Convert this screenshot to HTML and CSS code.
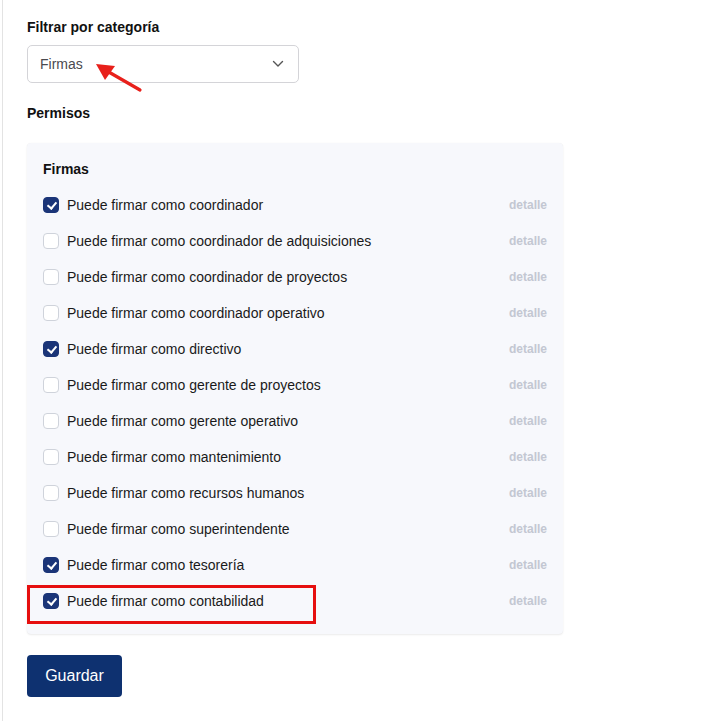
FILE: index.html
```html
<!DOCTYPE html>
<html lang="es">
<head>
<meta charset="utf-8">
<title>Permisos</title>
<link rel="stylesheet" href="styles.css">
</head>
<body>
<div class="page">
  <div class="field">
    <label class="label">Filtrar por categoría</label>
    <div class="select-wrap">
      <div class="select">
        <span>Firmas</span>
        <svg class="chev" width="12" height="8" viewBox="0 0 12 8"><path d="M1.5 1.5 L6 6 L10.5 1.5" fill="none" stroke="#555" stroke-width="1.4" stroke-linecap="round" stroke-linejoin="round"/></svg>
      </div>
      <svg class="arrow" width="60" height="40" viewBox="0 0 60 40"><line x1="49" y1="30" x2="16" y2="11" stroke="#e8201b" stroke-width="3.2" stroke-linecap="round"/><polygon points="5,4 24,6 14,20" fill="#e8201b"/></svg>
    </div>
  </div>

  <div class="label perm">Permisos</div>

  <div class="card">
    <div class="card-title">Firmas</div>
    <ul class="list">
      <li class="row"><span class="cb on"></span><span class="txt">Puede firmar como coordinador</span><span class="det">detalle</span></li>
      <li class="row"><span class="cb"></span><span class="txt">Puede firmar como coordinador de adquisiciones</span><span class="det">detalle</span></li>
      <li class="row"><span class="cb"></span><span class="txt">Puede firmar como coordinador de proyectos</span><span class="det">detalle</span></li>
      <li class="row"><span class="cb"></span><span class="txt">Puede firmar como coordinador operativo</span><span class="det">detalle</span></li>
      <li class="row"><span class="cb on"></span><span class="txt">Puede firmar como directivo</span><span class="det">detalle</span></li>
      <li class="row"><span class="cb"></span><span class="txt">Puede firmar como gerente de proyectos</span><span class="det">detalle</span></li>
      <li class="row"><span class="cb"></span><span class="txt">Puede firmar como gerente operativo</span><span class="det">detalle</span></li>
      <li class="row"><span class="cb"></span><span class="txt">Puede firmar como mantenimiento</span><span class="det">detalle</span></li>
      <li class="row"><span class="cb"></span><span class="txt">Puede firmar como recursos humanos</span><span class="det">detalle</span></li>
      <li class="row"><span class="cb"></span><span class="txt">Puede firmar como superintendente</span><span class="det">detalle</span></li>
      <li class="row"><span class="cb on"></span><span class="txt">Puede firmar como tesorería</span><span class="det">detalle</span></li>
      <li class="row last"><span class="cb on"></span><span class="txt">Puede firmar como contabilidad</span><span class="det">detalle</span><span class="highlight"></span></li>
    </ul>
  </div>

  <button class="btn">Guardar</button>
</div>
</body>
</html>
```

FILE: styles.css
```css
* { box-sizing: border-box; }
html, body { margin: 0; padding: 0; background: #fff; }
body {
  font-family: "Liberation Sans", Arial, Helvetica, sans-serif;
  color: #111827;
}
.page {
  margin-left: 2px;
  border-left: 1px solid #e3e3e3;
  min-height: 721px;
  padding: 17px 0 0 24px;
}
.label {
  display: block;
  font-size: 14px;
  font-weight: bold;
  line-height: 20px;
  color: #111;
}
.select-wrap {
  position: relative;
  margin-top: 8px;
  width: 272px;
}
.select {
  height: 38px;
  border: 1px solid #d4d4d8;
  border-radius: 5px;
  display: flex;
  align-items: center;
  justify-content: space-between;
  padding: 0 14px 0 12px;
  font-size: 14px;
  color: #4a4a4f;
  background: #fff;
}
.chev { display: block; }
.arrow {
  position: absolute;
  left: 64px;
  top: 15px;
}
.perm { margin-top: 20px; }
.card {
  margin-top: 20px;
  width: 536px;
  background: #f7f8fc;
  border-radius: 4px;
  box-shadow: 0 1px 2px rgba(0,0,0,0.08), 0 0 1px rgba(0,0,0,0.06);
  padding: 16px 16px 15px 16px;
}
.card-title {
  font-size: 14px;
  font-weight: bold;
  line-height: 20px;
  color: #111;
}
.list {
  list-style: none;
  margin: 8px 0 0 0;
  padding: 0;
}
.row {
  position: relative;
  height: 36px;
  display: flex;
  align-items: center;
  font-size: 14px;
}
.cb {
  width: 16px;
  height: 16px;
  border: 1px solid #cfd3db;
  border-radius: 4px;
  background: #fff;
  flex: none;
  margin-right: 8px;
  position: relative;
}
.cb.on {
  background: #1b3578;
  border-color: #1b3578;
}
.cb.on::after {
  content: "";
  position: absolute;
  left: 4.5px;
  top: 2px;
  width: 4px;
  height: 7px;
  border-right: 2px solid #fff;
  border-bottom: 2px solid #fff;
  transform: rotate(40deg);
}
.txt {
  flex: 1;
  color: #1a1a1a;
}
.det {
  font-size: 12px;
  font-weight: bold;
  color: #c3c7d2;
}
.highlight {
  position: absolute;
  left: -16px;
  top: 2px;
  width: 289px;
  height: 39px;
  border: 3px solid #e60f0f;
  pointer-events: none;
}
.btn {
  margin-top: 21px;
  width: 95px;
  height: 42px;
  border: none;
  border-radius: 4px;
  background: #0e3170;
  color: #fff;
  font-family: "Liberation Sans", Arial, sans-serif;
  font-size: 16px;
  padding: 0;
}
```
